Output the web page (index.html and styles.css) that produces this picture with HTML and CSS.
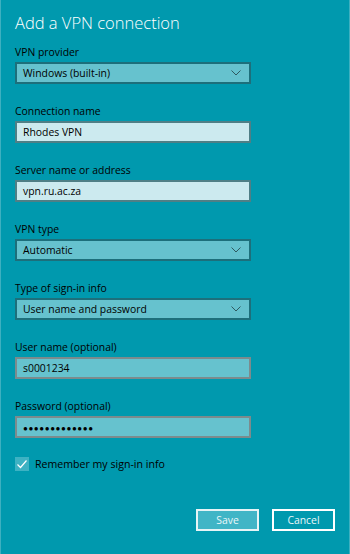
FILE: index.html
```html
<!DOCTYPE html>
<html lang="en">
<head>
    <meta charset="UTF-8">
    <meta name="viewport" content="width=device-width, initial-scale=1.0">
    <title>Add a VPN connection</title>
    <link rel="stylesheet" href="styles.css">
</head>
<body>
    <div class="dialog">
        <h1 class="title">Add a VPN connection</h1>

        <div class="field">
            <div class="label">VPN provider</div>
            <div class="box select">
                <span>Windows (built-in)</span>
                <svg class="chevron" width="10" height="6" viewBox="0 0 10 6"><polyline points="0.5,0.5 5,5 9.5,0.5" /></svg>
            </div>
        </div>

        <div class="field">
            <div class="label">Connection name</div>
            <div class="box text">Rhodes VPN</div>
        </div>

        <div class="field">
            <div class="label">Server name or address</div>
            <div class="box text">vpn.ru.ac.za</div>
        </div>

        <div class="field">
            <div class="label">VPN type</div>
            <div class="box select">
                <span>Automatic</span>
                <svg class="chevron" width="10" height="6" viewBox="0 0 10 6"><polyline points="0.5,0.5 5,5 9.5,0.5" /></svg>
            </div>
        </div>

        <div class="field">
            <div class="label">Type of sign-in info</div>
            <div class="box select">
                <span>User name and password</span>
                <svg class="chevron" width="10" height="6" viewBox="0 0 10 6"><polyline points="0.5,0.5 5,5 9.5,0.5" /></svg>
            </div>
        </div>

        <div class="field">
            <div class="label">User name (optional)</div>
            <div class="box plain">s0001234</div>
        </div>

        <div class="field">
            <div class="label">Password (optional)</div>
            <div class="box plain dots">●●●●●●●●●●●●●</div>
        </div>

        <div class="remember">
            <span class="check">
                <svg width="14" height="14" viewBox="0 0 14 14"><polyline points="2.5,7.5 5.5,10.5 11.5,3.5" /></svg>
            </span>
            <span>Remember my sign-in info</span>
        </div>

        <div class="actions">
            <div class="button save">Save</div>
            <div class="button cancel">Cancel</div>
        </div>
    </div>
</body>
</html>
```

FILE: styles.css
```css
body {
    margin: 0;
    background-color: #0099ae;
    font-family: 'Open Sans', 'Noto Sans', sans-serif;
    color: #000;
}

.dialog {
    height: 554px;
    box-sizing: border-box;
    padding: 9px 15px 0 15px;
    border-left: 1px solid #3db0c0;
    border-right: 1px solid #3db0c0;
}

.title {
    margin: 0 0 7px -1px;
    font-size: 16.5px;
    line-height: 28px;
    font-weight: 300;
    color: #fff;
}

.field {
    margin-bottom: 19px;
}

.label {
    font-size: 10.4px;
    line-height: 16px;
    margin: 0 0 2px -1px;
}

.box {
    width: 236px;
    height: 22px;
    box-sizing: border-box;
    margin-left: -1px;
    padding: 0 8px 0 6px;
    display: flex;
    align-items: center;
    justify-content: space-between;
    font-size: 10.4px;
    border: 2px solid #1d6f7b;
}

.select {
    background-color: #66c2ce;
}

.text {
    background-color: #cceaef;
    border-color: #4f7f86;
}

.plain {
    background-color: #66c2ce;
    border-color: #7c8b8d;
}

.dots {
    font-size: 8px;
    letter-spacing: 0.6px;
}

.chevron polyline {
    fill: none;
    stroke: #2f5a60;
    stroke-width: 1;
}

.remember {
    display: flex;
    align-items: center;
    gap: 6px;
    margin: 9px 0 0 -1px;
    font-size: 10.6px;
}

.check {
    width: 14px;
    height: 14px;
    background-color: #3db2c3;
    display: flex;
}

.check polyline {
    fill: none;
    stroke: #fff;
    stroke-width: 1.2;
}

.actions {
    display: flex;
    justify-content: flex-end;
    gap: 13px;
    margin: 38px -1px 0 0;
}

.button {
    width: 63px;
    height: 22px;
    box-sizing: border-box;
    border: 2px solid #fff;
    color: #eaf7f9;
    font-size: 10.4px;
    display: flex;
    align-items: center;
    justify-content: center;
}

.save {
    background-color: #40b5c6;
    border-color: #e6f4f6;
}
```
